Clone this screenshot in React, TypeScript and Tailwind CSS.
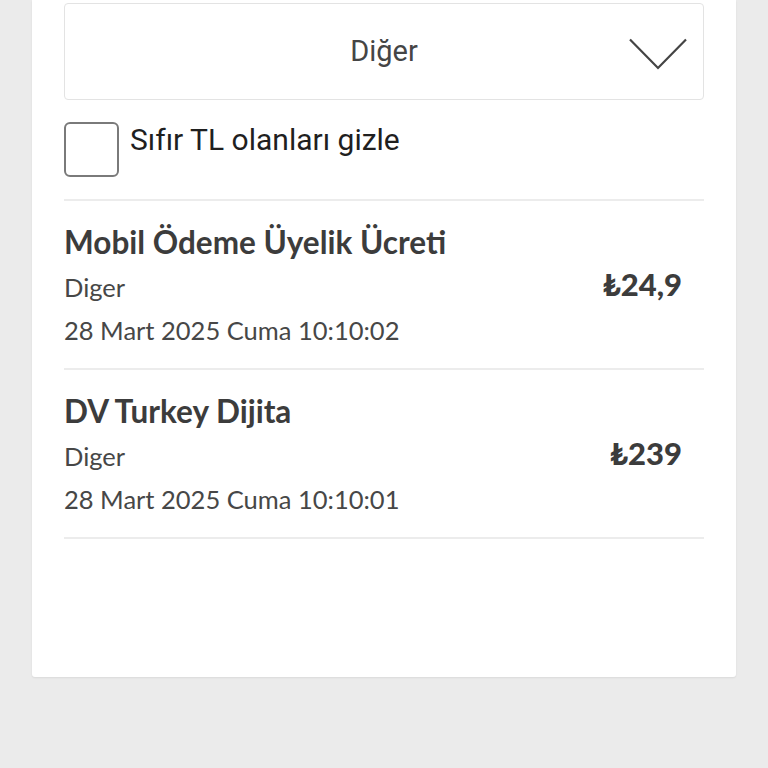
import React from 'react';

interface Txn {
  title: string;
  category: string;
  date: string;
  amount: string;
}

const txns: Txn[] = [
  { title: 'Mobil Ödeme Üyelik Ücreti', category: 'Diger', date: '28 Mart 2025 Cuma 10:10:02', amount: '₺24,9' },
  { title: 'DV Turkey Dijita', category: 'Diger', date: '28 Mart 2025 Cuma 10:10:01', amount: '₺239' },
];

const App: React.FC = () => {
  return (
    <div className="min-h-screen w-full bg-[#ebebeb]">
      <div className="mx-[32px] w-[704px] h-[677px] bg-white px-8 pt-[3px] shadow-[0_1px_2px_rgba(0,0,0,0.08)] rounded-b-[3px]">
        {/* Kategori seçici */}
        <div className="relative h-[97px] border border-[#e3e3e3] rounded-[4px] flex items-center justify-center">
          <span className="text-[29px] text-[#454545] font-['Roboto',sans-serif]">Diğer</span>
          <svg className="absolute right-[16px] top-[34px]" width="58" height="32" viewBox="0 0 58 32" fill="none">
            <path d="M1 1.5 L29 30 L57 1.5" stroke="#444" strokeWidth="2.2" />
          </svg>
        </div>

        {/* Sıfır TL filtresi */}
        <label className="mt-[22px] flex items-start gap-[11px]">
          <span className="w-[55px] h-[55px] border-2 border-[#7a7a7a] rounded-[6px] shrink-0" />
          <span className="mt-[3px] text-[30px] leading-none text-[#1f1f1f] font-['Roboto',sans-serif]">Sıfır TL olanları gizle</span>
        </label>

        {/* Hareketler */}
        <div className="mt-[22px] border-t-2 border-[#ececec]">
          {txns.map((t) => (
            <div key={t.date} className="flex items-center justify-between border-b-2 border-[#ececec] pt-[23px] pb-[17px] pr-[22px] font-['Lato',sans-serif]">
              <div className="flex flex-col">
                <span className="text-[31.5px] leading-[36px] font-bold text-[#3c3c3c]">{t.title}</span>
                <span className="mt-[7px] text-[25.5px] leading-[41px] text-[#474747]">{t.category}</span>
                <span className="mt-[2px] text-[25.5px] leading-[41px] text-[#474747]">{t.date}</span>
              </div>
              <span className="mb-[6px] text-[31px] font-black text-[#3c3c3c]">{t.amount}</span>
            </div>
          ))}
        </div>
      </div>
    </div>
  );
};

export default App;
